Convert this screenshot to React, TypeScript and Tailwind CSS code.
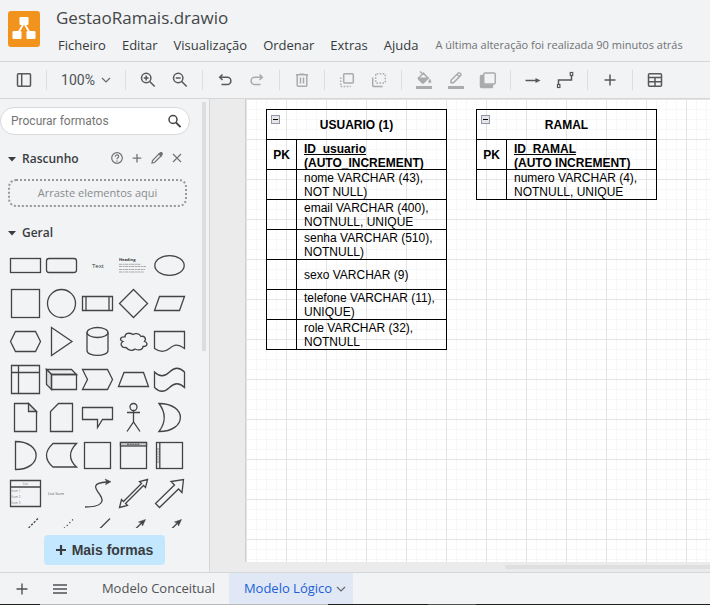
import type { ReactNode } from "react";

const menuItems = ["Ficheiro", "Editar", "Visualização", "Ordenar", "Extras", "Ajuda"];

function Separator() {
  return <span className="mx-1.5 h-5 w-px shrink-0 bg-[#dcddde]" />;
}

function ToolButton({ label, muted, children }: { label: string; muted?: boolean; children: ReactNode }) {
  return (
    <button
      type="button"
      aria-label={label}
      className={`flex h-8 w-8 shrink-0 items-center justify-center ${muted ? "text-[#a9abad]" : "text-[#56585a]"}`}
    >
      <svg width="20" height="20" viewBox="0 0 20 20" fill="none" stroke="currentColor" strokeWidth="1.5">
        {children}
      </svg>
    </button>
  );
}

function Chevron() {
  return (
    <svg width="10" height="6" viewBox="0 0 10 6" fill="none" stroke="#66686a" strokeWidth="1.2">
      <path d="M1 1l4 4 4-4" />
    </svg>
  );
}

function Logo() {
  return (
    <svg className="h-9 w-8 shrink-0" viewBox="0 0 32 36">
      <rect width="32" height="36" rx="3" fill="#f2931e" />
      <path d="M16 12L9 24M16 12l7 12" stroke="#fff" strokeWidth="1.8" />
      <g fill="#fff">
        <rect x="11.500" y="6" width="9" height="8" rx="1.2" />
        <rect x="4.500" y="20" width="9" height="8" rx="1.2" />
        <rect x="18.500" y="20" width="9" height="8" rx="1.2" />
      </g>
    </svg>
  );
}

function Toolbar() {
  return (
    <div role="toolbar" className="flex h-9 shrink-0 items-center overflow-hidden pl-2">
      <ToolButton label="Painel de formas">
        <rect x="3.5" y="3.7" width="13" height="12.6" rx="1" />
        <path d="M7.7 4v12" />
      </ToolButton>
      <Separator />
      <button type="button" className="flex h-8 w-[66px] shrink-0 items-center justify-center gap-1.5 font-[Roboto,sans-serif] text-[14px] text-[#505254]">
        100%
        <Chevron />
      </button>
      <Separator />
      <ToolButton label="Aproximar">
        <circle cx="8.2" cy="8" r="4.7" />
        <path d="M11.7 11.5l5 5M8.2 5.6v4.8M5.8 8h4.8" />
      </ToolButton>
      <ToolButton label="Afastar">
        <circle cx="8.2" cy="8" r="4.7" />
        <path d="M11.7 11.5l5 5M5.8 8h4.8" />
      </ToolButton>
      <Separator />
      <ToolButton label="Desfazer">
        <path d="M7.500 4.5L4.700 7.300 7.500 10M5 7.300h7.300a3.4 3.4 0 0 1 0 7.200H6.5" />
      </ToolButton>
      <ToolButton label="Refazer" muted>
        <path d="M12.500 4.5l2.800 2.800-2.800 2.700M15 7.300H7.700a3.4 3.4 0 0 0 0 7.200h5.800" />
      </ToolButton>
      <Separator />
      <ToolButton label="Eliminar" muted>
        <path d="M4 4.7h12M7.5 4.2h5M5.2 5v10.2q0 1 1 1h7.6q1 0 1-1V5M8.5 7.5v6M11.5 7.5v6" />
      </ToolButton>
      <Separator />
      <ToolButton label="Trazer para a frente" muted>
        <rect x="6.7" y="3.7" width="9.6" height="9.3" rx="1" />
        <path d="M3.7 7.5v9h10" strokeDasharray="1.6 1.4" />
      </ToolButton>
      <ToolButton label="Enviar para trás" muted>
        <rect x="6.7" y="3.7" width="9.6" height="9.3" rx="1" strokeDasharray="1.6 1.4" />
        <path d="M3.7 7.5v8q0 1 1 1h9" />
      </ToolButton>
      <Separator />
      <ToolButton label="Cor de preenchimento" muted>
        <path d="M6 1.5l2 2" />
        <path d="M9.3 3.2L4.7 8q-.5.6 0 1.1l3.6 3.5q.6.5 1.2 0L14 8z" />
        <path d="M4.8 8.2h9L9 13z" fill="currentColor" />
        <path d="M15.8 9q2.4 3.6 0 3.8-2.4-.2 0-3.8z" fill="currentColor" strokeWidth=".6" />
        <path d="M2 17.5h16" strokeWidth="3" />
      </ToolButton>
      <ToolButton label="Cor da linha" muted>
        <path d="M5 12.8v-2.5L12.3 3q.7-.6 1.4 0l1 1q.7.7 0 1.4L7.5 12.8zM11 4.5l2.3 2.3" />
        <path d="M2 17.5h16" strokeWidth="3" />
      </ToolButton>
      <ToolButton label="Sombra" muted>
        <path d="M5 5.5H3.5q-1 0-1 1v10q0 1 1 1h10q1 0 1-1V15H5z" fill="currentColor" />
        <rect x="5.7" y="3" width="11.6" height="11" rx="1.5" fill="#f1f3f5" />
      </ToolButton>
      <Separator />
      <ToolButton label="Conexão">
        <path d="M2.5 10.5h11" />
        <path d="M12.5 8l5 2.5-5 2.5z" fill="currentColor" stroke="none" />
      </ToolButton>
      <ToolButton label="Pontos de passagem">
        <path d="M3.5 15v-5h13V5" />
        <rect x="2.5" y="14.5" width="2.4" height="3" strokeWidth="1.2" />
        <rect x="15.3" y="2.5" width="2.4" height="3" strokeWidth="1.2" />
      </ToolButton>
      <Separator />
      <ToolButton label="Inserir">
        <path d="M10 4.5v11M4.5 10h11" />
      </ToolButton>
      <Separator />
      <ToolButton label="Tabela">
        <rect x="3.5" y="3.7" width="13" height="12.6" rx="1" />
        <path d="M3.5 7.5h13M3.5 11.8h13M10 7.5v9" />
      </ToolButton>
    </div>
  );
}

/* Each drawing fills a 36 x 38 palette cell. */
const shapes: { name: string; art: ReactNode }[] = [
  { name: "Retângulo", art: <rect x="3.5" y="11.5" width="30" height="14" /> },
  { name: "Retângulo arredondado", art: <rect x="3.5" y="11.5" width="30" height="14" rx="2.5" /> },
  {
    name: "Texto",
    art: <text x="13" y="20.5" fontSize="6" fill="#333" stroke="none">Text</text>,
  },
  {
    name: "Caixa de texto",
    art: (
      <>
        <text x="4" y="13.5" fontSize="4" fontWeight="700" fill="#333" stroke="none">Heading</text>
        <path d="M4 17.3h22M4 19.5h27M4 22.5h26M4 25h25" stroke="#777" strokeWidth=".6" strokeDasharray="3 .6 2 .5" />
      </>
    ),
  },
  { name: "Elipse", art: <ellipse cx="18.5" cy="18.5" rx="14.7" ry="9.8" /> },
  { name: "Quadrado", art: <rect x="4.5" y="4.5" width="28" height="28" /> },
  { name: "Círculo", art: <circle cx="18.5" cy="18.5" r="14" /> },
  { name: "Processo", art: <path d="M3.5 11.5h30v14h-30zM7 11.5v14M30 11.5v14" /> },
  { name: "Losango", art: <path d="M18.5 4.5l14 14-14 14-14-14z" /> },
  { name: "Paralelogramo", art: <path d="M8.5 11.5h25l-5 14h-25z" /> },
  { name: "Hexágono", art: <path d="M8.5 8.5h20l5 10-5 10h-20l-5-10z" /> },
  { name: "Triângulo", art: <path d="M8.5 4.5l20.5 14-20.5 14z" /> },
  {
    name: "Cilindro",
    art: (
      <>
        <ellipse cx="18.5" cy="9.5" rx="10.5" ry="5" />
        <path d="M8 9.5v18c0 6.6 21 6.6 21 0v-18" />
      </>
    ),
  },
  {
    name: "Nuvem",
    art: <path d="M10 13.8C5 13.500 4 17 8 18.500C4 20.500 7 25.500 11 24.500C14 28 18 28 20 26C24 28 28 26.500 28 23.500C33 23.500 33 19.500 29.500 18.500C32 15.500 29 12.500 26 13.500C24 10 20 10 18 11.500C14 9 10 10.500 10 13.800Z" />,
  },
  { name: "Documento", art: <path d="M3.5 8.500h30v17c-7.500-5-10-4-15 0s-10 3.500-15 0z" /> },
  { name: "Armazenamento interno", art: <path d="M4.500 4.500h28v28h-28zM4.500 11.500h28M11.500 4.500v28" /> },
  {
    name: "Cubo",
    art: (
      <>
        <path d="M3.500 8.500h25l5 5h-25z" fill="#ebecee" />
        <path d="M3.500 8.500l5 5v15l-5-5z" fill="#dcdee0" />
        <path d="M8.500 13.500h25v15h-25z" />
      </>
    ),
  },
  { name: "Etapa", art: <path d="M3.500 8.500h25l5 10-5 10h-25l5-10z" /> },
  { name: "Trapézio", art: <path d="M9 11.500h19.500l5 14h-30z" /> },
  { name: "Fita", art: <path d="M3.500 11c5 5 10 5 15 0s10-5 15 0v15.500c-5-5-10-5-15 0s-10 5-15 0z" /> },
  {
    name: "Nota",
    art: (
      <>
        <path d="M7.500 4.500h14l8 8v20h-22z" />
        <path d="M21.500 4.500v8h8z" fill="#dcdddd" />
      </>
    ),
  },
  { name: "Cartão", art: <path d="M15.500 4.500h14v28h-22v-20z" /> },
  { name: "Balão", art: <path d="M3.500 8.500h30v12h-10l-5 8v-8h-15z" /> },
  {
    name: "Ator",
    art: (
      <>
        <circle cx="18.500" cy="8" r="3.500" />
        <path d="M18.500 11.500V23M12 13.500h13M12 32.500L18.500 23l6.500 9.500" />
      </>
    ),
  },
  { name: "Ou", art: <path d="M8 4.500c28.500 0 28.500 28 0 28q10.500-14 0-28z" /> },
  { name: "E", art: <path d="M8.500 4.500c27.500 0 27.500 28 0 28z" /> },
  { name: "Armazenamento de dados", art: <path d="M10 6.500h23.500q-12 12 0 23.500H10q-13-11.500 0-23.500z" /> },
  { name: "Contentor", art: <rect x="5.500" y="5.500" width="26" height="26" /> },
  {
    name: "Contentor com título",
    art: (
      <>
        <rect x="5.500" y="5.500" width="26" height="26" />
        <rect x="5.500" y="5.500" width="26" height="3.500" fill="#ccc" />
        <path d="M12 7.200h13" strokeDasharray="2 .6" strokeWidth="1" />
      </>
    ),
  },
  {
    name: "Contentor horizontal",
    art: (
      <>
        <rect x="5.500" y="5.500" width="26" height="26" />
        <path d="M8.800 5.500v26" />
        <path d="M7 11v15" strokeDasharray="2 .6" strokeWidth=".6" />
      </>
    ),
  },
  {
    name: "Lista",
    art: (
      <>
        <path d="M3.500 5.500h30v26h-30zM3.500 12h30" />
        <g fill="#777" stroke="none" fontSize="3">
          <text x="16" y="10">List</text>
          <text x="4.500" y="16.500">Item 1</text>
          <text x="4.500" y="22.500">Item 2</text>
          <text x="4.500" y="28.500">Item 3</text>
        </g>
      </>
    ),
  },
  {
    name: "Item de lista",
    art: <text x="5" y="20" fontSize="4" fill="#555" stroke="none">List Item</text>,
  },
  {
    name: "Curva",
    art: (
      <>
        <path d="M6 32c16 0 20-5 15-12s-9-12 7-13" />
        <path d="M26 4l6 2.700-5.500 3 1.200-3z" fill="#444" strokeWidth=".5" />
      </>
    ),
  },
  {
    name: "Seta bidirecional",
    art: <path d="M32.500 4.500l-2 8-2-2-18 18 2 2-8 2 2-8 2 2 18-18-2-2z" />,
  },
  { name: "Seta", art: <path d="M32.500 4.500l-1.500 13-3.500-3.500L8.500 32.500l-4-4 19-18.500-3.500-3.500z" /> },
  { name: "Linha tracejada", art: <path d="M31 5.500l-27 27" strokeDasharray="2.200 1.500" /> },
  { name: "Linha pontilhada", art: <path d="M30 6.500l-26 26" strokeDasharray="1.200 2.600" /> },
  { name: "Linha", art: <path d="M31 5.500l-27 27" /> },
  {
    name: "Ligação bidirecional",
    art: (
      <>
        <path d="M28 8.500l-24 24" />
        <path d="M30.500 6.500l-3 6.500-1-3-3-1z" fill="#444" strokeWidth=".5" />
      </>
    ),
  },
  {
    name: "Ligação direcional",
    art: (
      <>
        <path d="M28 8.500l-24 24" />
        <path d="M30.500 6.500l-3 6.500-1-3-3-1z" fill="#444" strokeWidth=".5" />
      </>
    ),
  },
];

function SectionTitle({ children }: { children: ReactNode }) {
  return (
    <h2 className="flex items-center gap-1.5 text-[12px] leading-5 font-semibold text-[#3a3c3e]">
      <svg width="8" height="5" viewBox="0 0 8 5" fill="#3a3c3e">
        <path d="M0 0h8L4 4.500z" />
      </svg>
      {children}
    </h2>
  );
}

function SmallAction({ label, children }: { label: string; children: ReactNode }) {
  return (
    <button type="button" aria-label={label} className="flex h-5 w-5 items-center justify-center text-[#707274]">
      <svg width="14" height="14" viewBox="0 0 14 14" fill="none" stroke="currentColor" strokeWidth="1.2">
        {children}
      </svg>
    </button>
  );
}

function Sidebar() {
  return (
    <aside className="flex w-[210px] shrink-0 flex-col border-r border-[#d5d6d7]">
      <div className="flex min-h-0 flex-1">
        <div className="min-w-0 flex-1 overflow-hidden pt-2">
          <label className="mr-3 flex h-7 items-center rounded-full border border-[#d8d9da] bg-white pr-2 pl-2.5">
            <input
              type="text"
              aria-label="Procurar formatos"
              placeholder="Procurar formatos"
              className="w-0 flex-1 font-[Roboto,sans-serif] text-[12px] text-[#444] outline-none placeholder:text-[#757575]"
            />
            <svg width="14" height="14" viewBox="0 0 14 14" fill="none" stroke="#444" strokeWidth="1.500">
              <circle cx="6" cy="5.500" r="4" />
              <path d="M9 8.500l4.500 4.500" strokeWidth="1.800" />
            </svg>
          </label>
          <div className="mt-3.5 flex items-center justify-between pr-[15px] pl-2">
            <SectionTitle>Rascunho</SectionTitle>
            <div className="flex">
              <SmallAction label="Ajuda">
                <circle cx="7" cy="6" r="5.300" />
                <path d="M5.300 4.700q0-1.900 1.700-1.900t1.700 1.600q0 .8-.9 1.400T7 7.300M7 8.500v1.200" />
              </SmallAction>
              <SmallAction label="Adicionar">
                <path d="M7 2v8.500M2.700 6.200h8.600" strokeWidth="1.300" />
              </SmallAction>
              <SmallAction label="Editar">
                <path d="M2 11l.5-2.500 6.800-6.800 2 2L4.500 10.500z" />
                <path d="M9 2l1.500-1.300q.7-.5 1.400.2t.3 1.300L11 4z" fill="currentColor" />
              </SmallAction>
              <SmallAction label="Fechar">
                <path d="M3 2l8 8M11 2l-8 8" />
              </SmallAction>
            </div>
          </div>
          <div className="mt-2.5 mr-[15px] ml-2 flex h-7 items-center justify-center rounded-lg border-2 border-dotted border-[#999] text-[11px] text-[#8a8c8e]">
            Arraste elementos aqui
          </div>
          <div className="mt-4 pl-2">
            <SectionTitle>Geral</SectionTitle>
          </div>
          <div className="mt-1 grid grid-cols-[repeat(5,36px)] pl-[7px]">
            {shapes.map((shape) => (
              <button key={shape.name} type="button" aria-label={shape.name} className="h-[38px] w-9">
                <svg width="36" height="38" viewBox="0 0 36 38" fill="none" stroke="#444" strokeWidth="1.300">
                  {shape.art}
                </svg>
              </button>
            ))}
          </div>
        </div>
        <div className="mt-[3px] mr-[3px] h-[249px] w-1 bg-[#dcdddd]" />
      </div>
      <div className="flex h-11 shrink-0 items-start justify-center pt-[7px]">
        <button type="button" className="flex h-[30px] w-[121px] items-center justify-center gap-1.5 rounded bg-[#c2e7ff] font-['Liberation_Sans',sans-serif] text-[14px] font-bold text-[#3a3c3e]">
          <svg width="10" height="10" viewBox="0 0 10 10" stroke="#3a3c3e" strokeWidth="2.200">
            <path d="M5 0v10M0 5h10" />
          </svg>
          Mais formas
        </button>
      </div>
    </aside>
  );
}

type Field = { name: string; detail: string; primary?: boolean };

const usuario: Field[] = [
  { name: "ID_usuario", detail: "(AUTO_INCREMENT)", primary: true },
  { name: "nome VARCHAR (43),", detail: "NOT NULL)" },
  { name: "email VARCHAR (400),", detail: "NOTNULL, UNIQUE" },
  { name: "senha VARCHAR (510),", detail: "NOTNULL)" },
  { name: "sexo VARCHAR (9)", detail: "" },
  { name: "telefone VARCHAR (11),", detail: "UNIQUE)" },
  { name: "role VARCHAR (32),", detail: "NOTNULL" },
];

const ramal: Field[] = [
  { name: "ID_RAMAL", detail: "(AUTO INCREMENT)", primary: true },
  { name: "numero VARCHAR (4),", detail: "NOTNULL, UNIQUE" },
];

function Entity({ title, fields }: { title: string; fields: Field[] }) {
  return (
    <table className="w-[181px] shrink-0 table-fixed border-collapse font-['Liberation_Sans',sans-serif] text-[12px] leading-[14px] text-black">
      <colgroup>
        <col className="w-[30px]" />
        <col />
      </colgroup>
      <thead>
        <tr className="h-[30px]">
          <th colSpan={2} className="border border-black p-0">
            <div className="flex h-[29px] items-center">
              <button
                type="button"
                aria-label="Recolher"
                className="mb-[11px] ml-1 flex h-[9px] w-[9px] items-center justify-center border border-[#8e96a8] bg-[#e6e6e8]"
              >
                <span className="h-px w-[5px] bg-black" />
              </button>
              <span className="flex-1 pr-[13px] text-center">{title}</span>
            </div>
          </th>
        </tr>
      </thead>
      <tbody>
        {fields.map((field) => (
          <tr key={field.name} className="h-[30px]">
            <td className="border border-black p-0 text-center font-bold">{field.primary ? "PK" : ""}</td>
            <td className="border border-black p-0">
              <div className={`flex h-[29px] flex-col justify-center overflow-hidden pl-[7px] whitespace-nowrap ${field.primary ? "pt-0.5 font-bold" : ""}`}>
                <span className={field.primary ? "underline" : ""}>{field.name}</span>
                {field.detail && <span>{field.detail}</span>}
              </div>
            </td>
          </tr>
        ))}
      </tbody>
    </table>
  );
}

function Canvas() {
  return (
    <main className="flex min-w-0 flex-1 flex-col bg-[#ebebeb]">
      <div className="ml-[35px] min-h-0 flex-1 overflow-hidden border-l border-[#d0d0d0] bg-white bg-[linear-gradient(to_right,#e4e4e4_1px,transparent_1px),linear-gradient(to_bottom,#e4e4e4_1px,transparent_1px),linear-gradient(to_right,#f7f7f7_1px,transparent_1px),linear-gradient(to_bottom,#f7f7f7_1px,transparent_1px)] bg-[size:40px_40px,40px_40px,10px_10px,10px_10px]">
        <div className="flex items-start gap-[29px] pt-2.5 pl-5">
          <Entity title="USUARIO (1)" fields={usuario} />
          <Entity title="RAMAL" fields={ramal} />
        </div>
      </div>
      <div className="flex h-2.5 shrink-0 items-center">
        <div className="ml-[295px] h-1 flex-1 rounded-l-sm bg-[#dfdfdf]" />
      </div>
    </main>
  );
}

function PageTabs() {
  return (
    <footer className="shrink-0 border-t border-[#d5d6d7]">
      <nav className="flex h-[31px] items-center text-[13px] text-[#505254]">
        <button type="button" aria-label="Nova página" className="ml-3 flex h-full w-5 items-center justify-center">
          <svg width="12" height="12" viewBox="0 0 12 12" stroke="currentColor" strokeWidth="1.400">
            <path d="M6 .5v11M.5 6h11" />
          </svg>
        </button>
        <button type="button" aria-label="Páginas" className="ml-[18px] flex h-full w-5 items-center justify-center">
          <svg width="14" height="10" viewBox="0 0 14 10" stroke="currentColor" strokeWidth="1.400">
            <path d="M0 1h14M0 5h14M0 9h14" />
          </svg>
        </button>
        <button type="button" className="ml-[18px] flex h-full w-[141px] items-center justify-center">
          Modelo Conceitual
        </button>
        <button type="button" className="flex h-full w-[124px] items-center justify-center gap-1 bg-[#e0e8f6] pl-2 text-[#1a5fd8]">
          Modelo Lógico
          <Chevron />
        </button>
      </nav>
      <div className="flex h-px">
        <span className="w-10 bg-[#1e1f1a]" />
        <span className="w-72 bg-[#b9babb]" />
        <span className="w-[100px] bg-[#1e1f1a]" />
        <span className="w-12 bg-[#50514c]" />
        <span className="flex-1 bg-[#1e1f1a]" />
      </div>
    </footer>
  );
}

export default function App() {
  return (
    <div className="flex h-screen flex-col overflow-hidden bg-[#f1f3f5] font-['Open_Sans','Noto_Sans',sans-serif]">
      <header className="flex h-[62px] shrink-0 items-start gap-4 border-b border-[#d5d6d7] pl-2">
        <div className="pt-[11px]">
          <Logo />
        </div>
        <div className="min-w-0 flex-1 pt-1.5">
          <h1 className="text-[17px] leading-6 text-[#444648]">GestaoRamais.drawio</h1>
          <div className="flex items-center pt-[5px] pl-0.5 whitespace-nowrap">
            <nav className="flex gap-4 text-[13px] leading-5 text-[#37393b]">
              {menuItems.map((item) => (
                <button key={item} type="button">
                  {item}
                </button>
              ))}
            </nav>
            <span className="ml-[17px] text-[11px] leading-5 text-[#707274]">A última alteração foi realizada 90 minutos atrás</span>
          </div>
        </div>
      </header>
      <Toolbar />
      <div className="flex min-h-0 flex-1 border-t border-[#d5d6d7]">
        <Sidebar />
        <Canvas />
      </div>
      <PageTabs />
    </div>
  );
}
